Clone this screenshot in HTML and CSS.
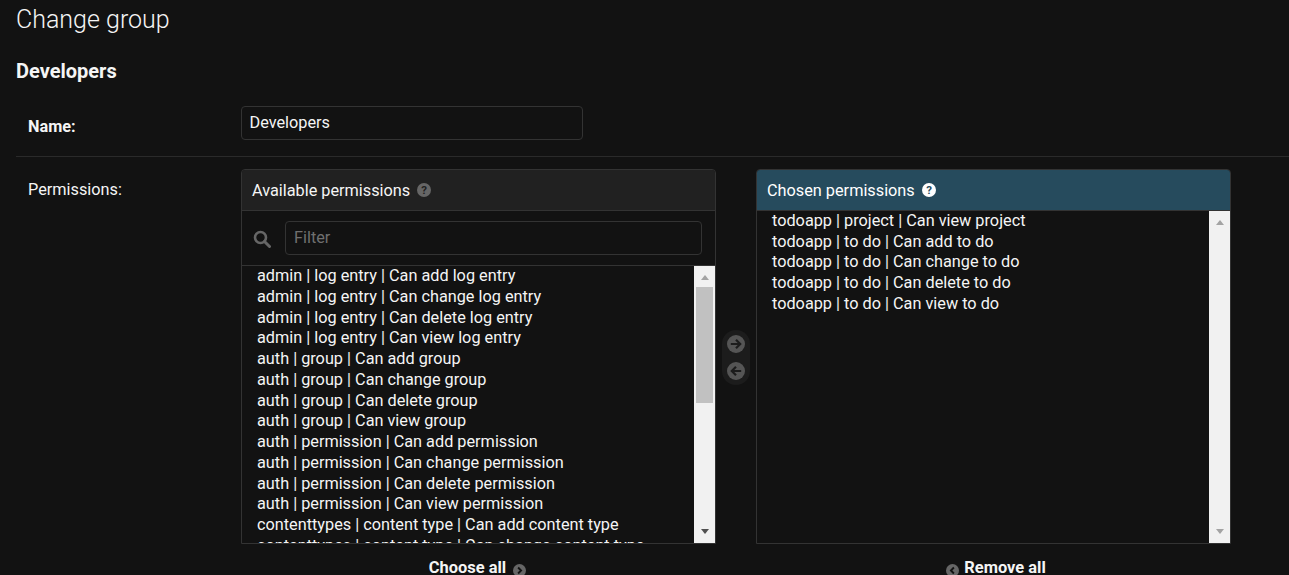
FILE: index.html
```html
<!DOCTYPE html>
<html lang="en">
<head>
    <meta charset="UTF-8">
    <meta name="viewport" content="width=device-width, initial-scale=1.0">
    <title>Change group</title>
    <link rel="stylesheet" href="styles.css">
</head>
<body>
    <main class="content">
        <h1>Change group</h1>
        <h2>Developers</h2>

        <form>
            <!-- Name -->
            <div class="form-row row-name">
                <label class="required" for="name">Name:</label>
                <input type="text" id="name" value="Developers">
            </div>

            <!-- Permissions -->
            <div class="form-row row-permissions">
                <label>Permissions:</label>
                <div class="selector">
                    <div class="selector-col">
                        <div class="selector-box">
                            <div class="selector-title">
                                Available permissions
                                <svg class="help" viewBox="0 0 14 14"><circle cx="7" cy="7" r="7" fill="#666"/><text x="7" y="11" text-anchor="middle" class="help-mark help-mark-dark">?</text></svg>
                            </div>
                            <div class="selector-filter">
                                <svg class="search" viewBox="0 0 18 18"><circle cx="7.5" cy="7.5" r="5.5" fill="none" stroke="#666" stroke-width="2.6"/><path d="M11.5 11.5l5 5" stroke="#666" stroke-width="3" stroke-linecap="round"/></svg>
                                <input type="text" placeholder="Filter">
                            </div>
                            <div class="list-wrap list-available">
                                <div class="perm-list">
                                    <div>admin | log entry | Can add log entry</div>
                                    <div>admin | log entry | Can change log entry</div>
                                    <div>admin | log entry | Can delete log entry</div>
                                    <div>admin | log entry | Can view log entry</div>
                                    <div>auth | group | Can add group</div>
                                    <div>auth | group | Can change group</div>
                                    <div>auth | group | Can delete group</div>
                                    <div>auth | group | Can view group</div>
                                    <div>auth | permission | Can add permission</div>
                                    <div>auth | permission | Can change permission</div>
                                    <div>auth | permission | Can delete permission</div>
                                    <div>auth | permission | Can view permission</div>
                                    <div>contenttypes | content type | Can add content type</div>
                                    <div>contenttypes | content type | Can change content type</div>
                                </div>
                                <div class="scrollbar">
                                    <span class="arrow-up"></span>
                                    <span class="thumb"></span>
                                    <span class="arrow-down"></span>
                                </div>
                            </div>
                        </div>
                        <a class="select-all choose-all">Choose all <svg class="mini" viewBox="0 0 14 14"><circle cx="7" cy="7" r="7" fill="#666"/><path d="M5.5 3.8L8.7 7l-3.2 3.2" fill="none" stroke="#121212" stroke-width="2"/></svg></a>
                    </div>

                    <div class="chooser">
                        <svg class="move" viewBox="0 0 18 18"><circle cx="9" cy="9" r="9" fill="#555"/><path d="M3.8 9h9M9 4.8L13.2 9 9 13.2" fill="none" stroke="#1c1c1c" stroke-width="2.2"/></svg>
                        <svg class="move" viewBox="0 0 18 18"><circle cx="9" cy="9" r="9" fill="#555"/><path d="M14.2 9h-9M9 4.8L4.8 9 9 13.2" fill="none" stroke="#1c1c1c" stroke-width="2.2"/></svg>
                    </div>

                    <div class="selector-col">
                        <div class="selector-box">
                            <div class="selector-title title-chosen">
                                Chosen permissions
                                <svg class="help" viewBox="0 0 14 14"><circle cx="7" cy="7" r="7" fill="#fff"/><text x="7" y="11" text-anchor="middle" class="help-mark help-mark-blue">?</text></svg>
                            </div>
                            <div class="list-wrap list-chosen">
                                <div class="perm-list">
                                    <div>todoapp | project | Can view project</div>
                                    <div>todoapp | to do | Can add to do</div>
                                    <div>todoapp | to do | Can change to do</div>
                                    <div>todoapp | to do | Can delete to do</div>
                                    <div>todoapp | to do | Can view to do</div>
                                </div>
                                <div class="scrollbar scrollbar-idle">
                                    <span class="arrow-up"></span>
                                    <span class="arrow-down"></span>
                                </div>
                            </div>
                        </div>
                        <a class="select-all remove-all">
                            <svg class="mini" viewBox="0 0 14 14"><circle cx="7" cy="7" r="7" fill="#666"/><path d="M8.5 3.8L5.3 7l3.2 3.2" fill="none" stroke="#121212" stroke-width="2"/></svg> Remove all</a>
                    </div>
                </div>
            </div>
        </form>
    </main>
</body>
</html>
```

FILE: styles.css
```css
html, body {
    height: 575px;
    overflow: hidden;
}
body {
    margin: 0;
    background-color: #121212;
    color: #f5f5f5;
    font-family: Roboto, "Liberation Sans", sans-serif;
    font-size: 16.27px;
}
.content {
    padding: 0 0 0 16px;
}
h1 {
    margin: 0;
    padding-top: 5px;
    font-size: 25px;
    font-weight: 300;
    line-height: 30px;
    color: #f5f5f5;
}
h2 {
    margin: 0;
    padding-top: 24px;
    font-size: 20px;
    font-weight: 700;
    line-height: 24px;
    color: #f5f5f5;
}
.form-row {
    display: flex;
    padding: 0 0 0 12px;
}
.form-row > label {
    width: 213px;
    flex: none;
    line-height: 20px;
}
.row-name {
    padding-top: 23px;
    padding-bottom: 16px;
    border-bottom: 1px solid #2a2a2a;
}
.row-name > label {
    font-weight: 700;
    padding-top: 11px;
}
.row-name input {
    width: 342px;
    height: 34px;
    box-sizing: border-box;
    padding: 0 7.5px 2px;
    background: #121212;
    border: 1px solid #333;
    border-radius: 4px;
    color: #f5f5f5;
    font: 16.27px Roboto, sans-serif;
}
.row-permissions {
    padding-top: 12px;
}
.row-permissions > label {
    padding-top: 11px;
}
.selector {
    display: flex;
    align-items: flex-start;
}
.selector-col {
    width: 475px;
}
.selector-box {
    height: 375px;
    box-sizing: border-box;
    display: flex;
    flex-direction: column;
    border: 1px solid #333;
    border-radius: 4px 4px 0 0;
    overflow: hidden;
}
.selector-title {
    flex: none;
    height: 41px;
    box-sizing: border-box;
    display: flex;
    align-items: center;
    gap: 7px;
    padding: 0 10px;
    background: #212121;
    border-bottom: 1px solid #333;
}
.title-chosen {
    background: #264b5d;
    color: #fff;
}
.help {
    width: 14px;
    height: 14px;
}
.help-mark {
    font: 700 11.5px Roboto, sans-serif;
}
.help-mark-dark {
    fill: #212121;
}
.help-mark-blue {
    fill: #264b5d;
}
.selector-filter {
    flex: none;
    height: 55px;
    box-sizing: border-box;
    display: flex;
    align-items: center;
    padding: 0 13px 0 11px;
    border-bottom: 1px solid #333;
}
.search {
    width: 18px;
    height: 18px;
    flex: none;
    margin-top: 2px;
    margin-right: 14px;
}
.selector-filter input {
    flex: 1;
    min-width: 0;
    height: 34px;
    box-sizing: border-box;
    padding: 0 8px 2px;
    background: #121212;
    border: 1px solid #333;
    border-radius: 4px;
    color: #f5f5f5;
    font: 16.27px Roboto, sans-serif;
}
.selector-filter input::placeholder {
    color: #6f6f6f;
}
.list-wrap {
    flex: 1;
    min-height: 0;
    display: flex;
}
.perm-list {
    flex: 1;
    min-width: 0;
    overflow: hidden;
    padding: 0 15px;
    line-height: 20.75px;
    white-space: nowrap;
    color: #f5f5f5;
}
.list-chosen .perm-list {
    margin-top: -0.1px;
}
.scrollbar {
    flex: none;
    width: 21px;
    box-sizing: border-box;
    display: flex;
    flex-direction: column;
    align-items: center;
    background: #f1f1f1;
    padding-top: 9px;
    padding-bottom: 9px;
}
.thumb {
    width: 17px;
    height: 116px;
    margin-top: 7px;
    margin-bottom: auto;
    background: #c1c1c1;
}
.arrow-up, .arrow-down {
    width: 0;
    height: 0;
    border-left: 4.5px solid transparent;
    border-right: 4.5px solid transparent;
}
.arrow-up {
    border-bottom: 5px solid #a3a3a3;
}
.arrow-down {
    border-top: 5px solid #505050;
}
.scrollbar-idle {
    justify-content: space-between;
}
.scrollbar-idle .arrow-down {
    border-top-color: #a3a3a3;
}
.chooser {
    width: 28px;
    margin: 161px 6px 0;
    padding: 5px 0;
    box-sizing: border-box;
    display: flex;
    flex-direction: column;
    align-items: center;
    gap: 9px;
    background: #1c1c1c;
    border-radius: 14px;
}
.move {
    width: 18px;
    height: 18px;
}
.select-all {
    display: flex;
    align-items: center;
    justify-content: center;
    margin-top: 14px;
    line-height: 20px;
    font-size: 16.45px;
    font-weight: 700;
    color: #f5f5f5;
}
.choose-all {
    gap: 7px;
    padding-right: 2px;
}
.remove-all {
    gap: 5px;
    padding-left: 5px;
}
.mini {
    width: 13px;
    height: 13px;
    margin-top: 4px;
}
```
